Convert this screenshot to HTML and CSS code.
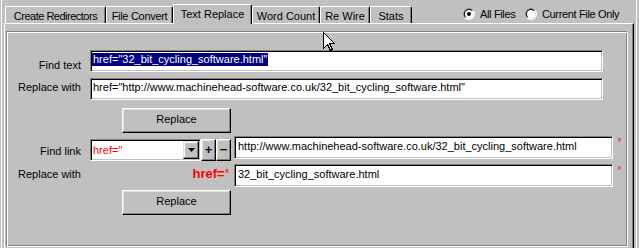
FILE: index.html
```html
<!DOCTYPE html>
<html>
<head>
<meta charset="utf-8">
<link rel="stylesheet" href="styles.css">
</head>
<body>
<div class="window">
  <div class="tabstrip">
    <div class="tab t1">Create Redirectors</div>
    <div class="tab t2">File Convert</div>
    <div class="tab sel t3">Text Replace</div>
    <div class="tab t4">Word Count</div>
    <div class="tab t5">Re Wire</div>
    <div class="tab t6">Stats</div>
    <div class="radios">
      <div class="radio first">
        <svg class="rb" width="12" height="12" viewBox="0 0 12 12"><circle cx="6" cy="6" r="6" fill="#fff"/><path d="M10.243 1.757A6 6 0 0 0 1.757 10.243Z" fill="#808080"/><circle cx="6" cy="6" r="5" fill="#dfdfdf"/><path d="M9.536 2.464A5 5 0 0 0 2.464 9.536Z" fill="#000"/><circle cx="6" cy="6" r="4" fill="#fff"/><circle cx="6" cy="6" r="2" fill="#000"/></svg>
        <span class="rtext">All Files</span>
      </div>
      <div class="radio">
        <svg class="rb" width="12" height="12" viewBox="0 0 12 12"><circle cx="6" cy="6" r="6" fill="#fff"/><path d="M10.243 1.757A6 6 0 0 0 1.757 10.243Z" fill="#808080"/><circle cx="6" cy="6" r="5" fill="#dfdfdf"/><path d="M9.536 2.464A5 5 0 0 0 2.464 9.536Z" fill="#000"/><circle cx="6" cy="6" r="4" fill="#fff"/></svg>
        <span class="rtext">Current File Only</span>
      </div>
    </div>
  </div>
  <div class="page">
    <div class="panel">
      <div class="row r1">
        <div class="lbl low">Find text</div>
        <div class="field wide"><span class="hl">href="32_bit_cycling_software.html"</span></div>
      </div>
      <div class="row r2">
        <div class="lbl">Replace with</div>
        <div class="field wide">href="http://www.machinehead-software.co.uk/32_bit_cycling_software.html"</div>
      </div>
      <div class="btnrow"><div class="btn wbtn">Replace</div></div>
      <div class="row r3">
        <div class="lbl low">Find link</div>
        <div class="combo">
          <span class="combo-text">href="</span>
          <span class="drop"><svg width="7" height="4" viewBox="0 0 7 4"><path d="M0 0H7L3.5 4Z" fill="#000"/></svg></span>
        </div>
        <div class="btn sq">+</div>
        <div class="btn sq">−</div>
        <div class="field url">http://www.machinehead-software.co.uk/32_bit_cycling_software.html</div>
        <span class="quote">"</span>
      </div>
      <div class="row r4">
        <div class="lbl mid">Replace with</div>
        <div class="prefix">href=<span class="pq">"</span></div>
        <div class="field url">32_bit_cycling_software.html</div>
        <span class="quote">"</span>
      </div>
      <div class="btnrow b2"><div class="btn wbtn">Replace</div></div>
    </div>
  </div>
  <svg class="cursor" width="13" height="20" viewBox="0 0 13 20"><path d="M0.5 0.5V16.5L4.5 12.5L7.5 18.5L9.5 17.5L6.5 11.5H11.5Z" fill="#fff" stroke="#000" stroke-width="1" shape-rendering="crispEdges"/></svg>
</div>
</body>
</html>
```
FILE: styles.css
```css
html, body {
  margin: 0;
  padding: 0;
  background: #c0c0c0;
  overflow: hidden;
}
body {
  font: 11px/13px "Liberation Sans", Arial, sans-serif;
  color: #000;
}
.window {
  position: relative;
  margin-left: 1px;
  width: 636px;
  height: 248px;
  box-sizing: border-box;
  border-left: 1px solid #fff;
  border-right: 1px solid #fff;
  padding: 0 2px;
}
.tabstrip {
  display: flex;
  align-items: flex-end;
  height: 23px;
  padding-left: 1px;
}
.tab {
  box-sizing: border-box;
  height: 17px;
  padding-top: 3px;
  text-align: center;
  white-space: nowrap;
  border: 1px solid #fff;
  border-bottom: 0;
  border-right-color: #000;
  border-radius: 2px 2px 0 0;
  box-shadow: inset -1px 0 #808080;
  background: #c0c0c0;
}
.tab.sel {
  height: 20px;
  margin-bottom: -1px;
  position: relative;
  z-index: 1;
}
.t1 { width: 101px; letter-spacing: -0.5px; }
.t2 { width: 67px; letter-spacing: -0.3px; }
.t3 { width: 79px; }
.t4 { width: 68px; }
.t5 { width: 50px; }
.t6 { width: 42px; }
.radios {
  display: flex;
  align-self: flex-start;
  margin-top: 8px;
  margin-left: 51px;
}
.radio {
  display: flex;
  align-items: flex-start;
  gap: 5px;
  white-space: nowrap;
}
.radio.first { width: 62px; }
.rb { display: block; }
.rtext { letter-spacing: -0.35px; }
.page {
  box-sizing: border-box;
  width: 630px;
  height: 230px;
  border: 1px solid #fff;
  border-right-color: #000;
  border-bottom-color: #000;
  box-shadow: inset -1px -1px #808080;
  padding: 7px 5px 0 1px;
}
.panel {
  box-sizing: border-box;
  width: 622px;
  height: 216px;
  border: 1px solid;
  border-color: #808080 #fff #fff #808080;
  box-shadow: inset 1px 1px #fff, inset -1px -1px #808080;
  padding-top: 18px;
}
.row {
  display: flex;
  align-items: flex-start;
}
.lbl {
  box-sizing: border-box;
  width: 74px;
  margin-right: 9px;
  text-align: right;
  white-space: nowrap;
  padding-top: 3px;
}
.lbl.low { padding-top: 9px; }
.lbl.mid { padding-top: 4px; }
.r2 { margin-top: 6px; }
.field {
  box-sizing: border-box;
  height: 22px;
  background: #fff;
  border: 1px solid;
  border-color: #808080 #fff #fff #808080;
  box-shadow: inset 1px 1px #000, inset -1px -1px #c0c0c0;
  white-space: nowrap;
  overflow: hidden;
  padding: 2px 2px 0 2px;
}
.field.wide { width: 513px; }
.hl {
  display: inline-block;
  margin-left: -1px;
  padding: 0 1px;
  height: 13px;
  background: #000080;
  color: #fff;
}
.btnrow {
  display: flex;
  margin-top: 8px;
  padding-left: 115px;
}
.btnrow.b2 { margin-top: 3px; }
.btn {
  box-sizing: border-box;
  border: 1px solid;
  border-color: #fff #000 #000 #fff;
  box-shadow: inset -1px -1px #808080, inset 1px 1px #dfdfdf;
  background: #c0c0c0;
  text-align: center;
  white-space: nowrap;
}
.wbtn {
  width: 109px;
  height: 25px;
  padding-top: 4px;
}
.r3 { margin-top: 3px; }
.combo {
  box-sizing: border-box;
  width: 111px;
  height: 22px;
  margin-top: 3px;
  background: #fff;
  border: 1px solid;
  border-color: #808080 #fff #fff #808080;
  box-shadow: inset 1px 1px #000, inset -1px -1px #c0c0c0;
  padding: 1px;
  display: flex;
  justify-content: space-between;
}
.combo-text {
  color: #ff0000;
  padding: 3px 0 0 1px;
}
.drop {
  box-sizing: border-box;
  width: 16px;
  height: 18px;
  border: 1px solid;
  border-color: #dfdfdf #000 #000 #dfdfdf;
  box-shadow: inset -1px -1px #808080, inset 1px 1px #fff;
  background: #c0c0c0;
  display: flex;
  align-items: center;
  justify-content: center;
}
.drop svg { display: block; }
.sq {
  width: 15px;
  height: 22px;
  margin-top: 3px;
  font: bold 13px/18px "Liberation Sans", Arial, sans-serif;
  padding-top: 1px;
}
.field.url {
  width: 379px;
  height: 23px;
  margin-left: 3px;
  padding: 3px 2px 0 3px;
}
.quote {
  display: inline-block;
  margin-left: 5px;
  margin-top: 2px;
  color: #ff0000;
  font: 900 12px/11px "DejaVu Sans", sans-serif;
  transform: scaleX(0.5);
  transform-origin: left center;
}
.r4 { margin-top: 3px; }
.prefix {
  box-sizing: border-box;
  width: 141px;
  margin-top: 2px;
  padding-right: 1px;
  text-align: right;
  color: #ff0000;
  font: bold 13px/15px "Liberation Sans", Arial, sans-serif;
  white-space: nowrap;
}
.pq {
  display: inline-block;
  vertical-align: top;
  margin-top: 2px;
  margin-right: -2px;
  font: 900 14px/13px "DejaVu Sans", sans-serif;
  transform: scaleX(0.55);
  transform-origin: left center;
}
.cursor {
  position: absolute;
  left: 321px;
  top: 32px;
  display: block;
}
```
